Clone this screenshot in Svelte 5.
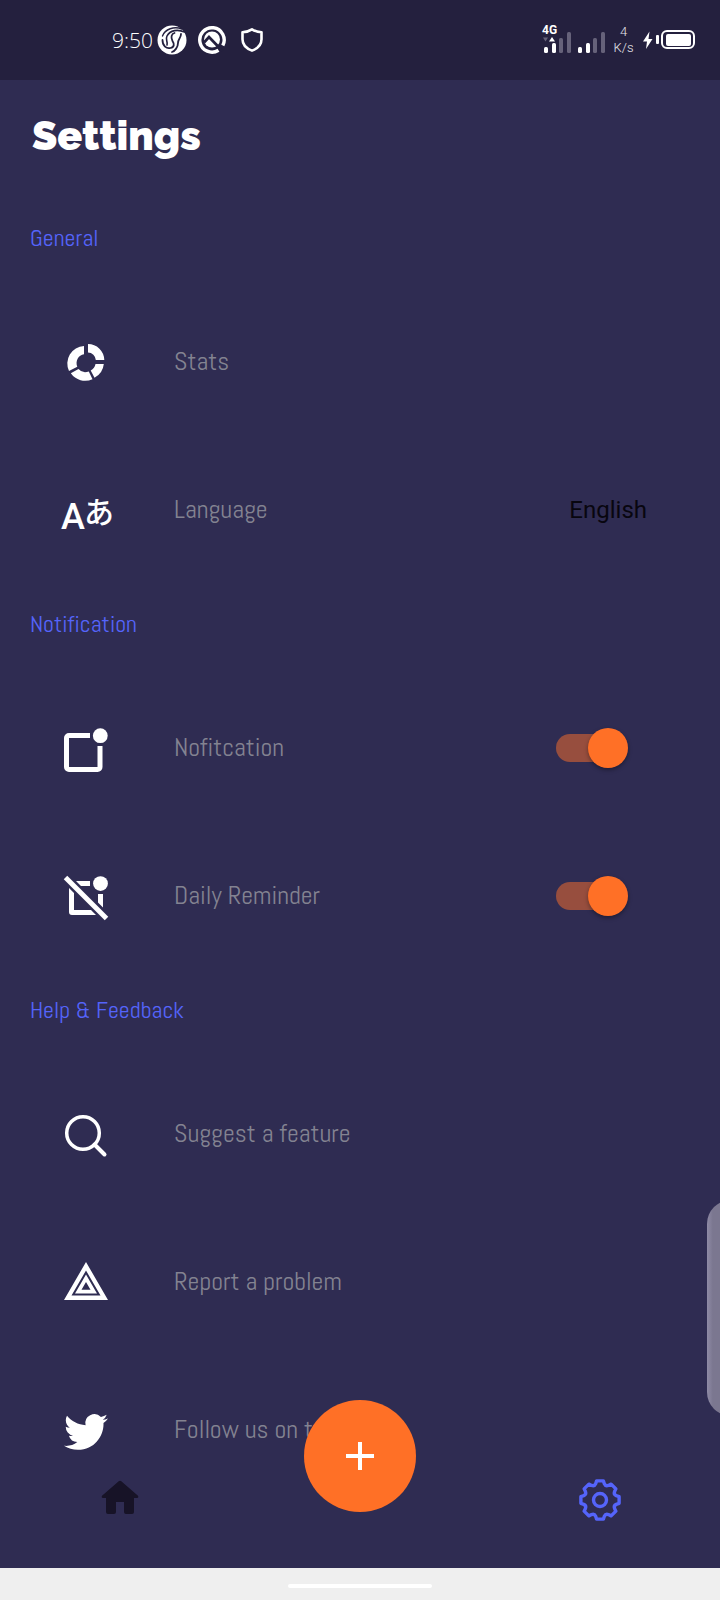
<script>
  let notification = $state(true);
  let reminder = $state(true);

  const point = (deg, r) => {
    const a = (deg * Math.PI) / 180;
    return `${(24 + r * Math.sin(a)).toFixed(2)} ${(24 - r * Math.cos(a)).toFixed(2)}`;
  };
  const gear =
    Array.from({ length: 8 }, (_, i) => {
      const a = i * 45;
      return `${i ? 'L' : 'M'}${point(a - 10, 19.4)}L${point(a + 10, 19.4)}L${point(a + 15, 16.8)}Q${point(a + 22.5, 14.6)} ${point(a + 30, 16.8)}`;
    }).join('') + 'Z';
</script>

<div class="screen">
  <header class="status">
    <div class="group">
      <time>9:50</time>
      <svg class="badge" width="30" height="30" viewBox="0 0 30 30" aria-hidden="true">
        <circle cx="15" cy="15" r="14.5" fill="#fff" />
        <g fill="none" stroke="#24203e" stroke-linecap="round">
          <path d="M25 4C17 1 8 4 5.500 11" stroke-width="1.400" />
          <path d="M27.500 7C21 4 13 5 10 11c-2 4 1 5 0 9" stroke-width="1.600" />
          <path d="M5.500 15c0 6 4 9 8 8 4-1 4-4 2-7-2-4-1-7 2-8" stroke-width="1.800" />
          <path d="M24 9c0 4-3 5-3 9s-3 8-6 9" stroke-width="1.800" />
        </g>
      </svg>
      <svg class="badge" width="30" height="30" viewBox="0 0 30 30" aria-hidden="true">
        <path d="M21.500 25.200A12.200 12.200 0 1 1 25.800 20.500" fill="none" stroke="#fff" stroke-width="3.400" />
        <circle cx="15" cy="14.500" r="8" fill="#fff" />
        <path d="M7 17.500L12 12L25.500 26" fill="none" stroke="#24203e" stroke-width="2.800" />
      </svg>
      <svg class="badge" width="30" height="30" viewBox="0 0 30 30" aria-hidden="true">
        <path d="M15 4.300c3 2 6 2.700 9.500 3v7c0 5.500-4 9.300-9.500 11.300-5.500-2-9.500-5.800-9.500-11.300v-7c3.500-.3 6.500-1 9.500-3z" fill="none" stroke="#fff" stroke-width="2.600" stroke-linejoin="round" />
      </svg>
    </div>
    <div class="group right">
      <div class="mobile">
        <span class="net">4G</span>
        <svg width="64" height="30" viewBox="0 0 64 30" aria-hidden="true">
          <g fill="#fff">
            <rect x="3" y="22" width="4" height="6" rx="1.500" />
            <rect x="11" y="18" width="4" height="10" rx="1.500" />
            <path d="M8 16.500l3-4.500 3 4.500z" />
            <rect x="37" y="22" width="4" height="6" rx="1.500" />
            <rect x="45" y="18" width="4" height="10" rx="1.500" />
          </g>
          <g fill="#66627a">
            <path d="M2 12.500h5l-2.500 4z" />
            <rect x="18" y="13" width="4" height="15" rx="1.500" />
            <rect x="26" y="7" width="4" height="21" rx="1.500" />
            <rect x="52" y="13" width="4" height="15" rx="1.500" />
            <rect x="60" y="7" width="4" height="21" rx="1.500" />
          </g>
        </svg>
      </div>
      <div class="rate"><span>4</span><span>K/s</span></div>
      <svg width="53" height="22" viewBox="0 0 53 22" aria-hidden="true">
        <path d="M7.500 2.500L1 12.500h4l-1 7.500 6.500-10H6.500z" fill="#fff" />
        <rect x="14" y="6" width="3" height="9" rx="1" fill="#fff" />
        <rect x="20" y="2" width="32" height="17" rx="5" fill="none" stroke="#fff" stroke-width="2" />
        <rect x="24" y="5" width="25" height="12" rx="2" fill="#fff" />
      </svg>
    </div>
  </header>

  <main>
    <h1>Settings</h1>

    <section>
      <h2>General</h2>
      <a class="row" href="#stats">
        <svg class="icon" viewBox="0 0 48 48" aria-hidden="true">
          <path d="M22 8A17.500 17.500 0 0 0 7 33L15.300 28.700A9 9 0 0 1 22 16.200ZM8.800 35.300A17.500 17.500 0 0 0 30.500 41.200L26.800 33.500A9 9 0 0 1 16.500 31ZM41.800 26H33.500A9 9 0 0 1 28.700 32.500L32.500 39.700A17.500 17.500 0 0 0 41.800 26ZM26 6A16.300 16.300 0 0 1 42.300 22H33.800A8 8 0 0 0 26 14.500Z" />
        </svg>
        <span>Stats</span>
      </a>
      <a class="row" href="#language">
        <svg class="icon" viewBox="0 0 48 48" aria-hidden="true">
          <text class="latin" x="-1" y="43">A</text>
          <text class="kana" x="22" y="37">あ</text>
        </svg>
        <span>Language</span>
        <span class="value">English</span>
      </a>
    </section>

    <section>
      <h2>Notification</h2>
      <label class="row">
        <svg class="icon" viewBox="0 0 48 48" aria-hidden="true">
          <path d="M28 11.500H7A2.500 2.500 0 0 0 4.500 14V43A2.500 2.500 0 0 0 7 45.500H35.500A2.500 2.500 0 0 0 38 43V22" fill="none" stroke="#fff" stroke-width="5" />
          <circle cx="38.300" cy="11.700" r="7.400" />
        </svg>
        <span>Nofitcation</span>
        <input type="checkbox" role="switch" bind:checked={notification} />
      </label>
      <label class="row">
        <svg class="icon" viewBox="0 0 48 48" aria-hidden="true">
          <path d="M14 9H28V14H19ZM7 16L12 21V38H29L34 43H10A3 3 0 0 1 7 40ZM36 22H41V35.500L36 30.500Z" />
          <path d="M3.500 5.500L44.500 46.500" stroke="#fff" stroke-width="5" />
          <circle cx="38.500" cy="11.600" r="7.400" />
        </svg>
        <span>Daily Reminder</span>
        <input type="checkbox" role="switch" bind:checked={reminder} />
      </label>
    </section>

    <section>
      <h2>Help &amp; Feedback</h2>
      <a class="row" href="#suggest">
        <svg class="icon" viewBox="0 0 48 48" aria-hidden="true">
          <circle cx="21" cy="23" r="16.300" fill="none" stroke="#fff" stroke-width="3.500" />
          <path d="M32.500 34.500L42.500 44.500" stroke="#fff" stroke-width="4" stroke-linecap="round" />
        </svg>
        <span>Suggest a feature</span>
      </a>
      <a class="row" href="#report">
        <svg class="icon" viewBox="0 0 48 48" aria-hidden="true">
          <path fill-rule="evenodd" d="M24 4L46 42H2ZM24 12.500L9.500 37.500H38.500ZM24 16.500L35 35.500H13ZM24 24L19.500 31.700H28.500Z" />
        </svg>
        <span>Report a problem</span>
      </a>
      <a class="row" href="#twitter">
        <svg class="icon" viewBox="0 0 48 48" aria-hidden="true">
          <path transform="translate(2 4) scale(1.833)" d="M23.953 4.570a10 10 0 0 1-2.825.775 4.958 4.958 0 0 0 2.163-2.723c-.951.555-2.005.959-3.127 1.184a4.920 4.920 0 0 0-8.384 4.482C7.690 8.095 4.067 6.130 1.640 3.162a4.822 4.822 0 0 0-.666 2.475c0 1.710.870 3.213 2.188 4.096a4.904 4.904 0 0 1-2.228-.616v.060a4.923 4.923 0 0 0 3.946 4.827 4.996 4.996 0 0 1-2.212.085 4.936 4.936 0 0 0 4.604 3.417 9.867 9.867 0 0 1-6.102 2.105c-.390 0-.779-.023-1.170-.067a13.995 13.995 0 0 0 7.557 2.209c9.053 0 13.998-7.496 13.998-13.985 0-.210 0-.420-.015-.630A9.935 9.935 0 0 0 24 4.590z" />
        </svg>
        <span>Follow us on twitter</span>
      </a>
    </section>
  </main>

  <nav>
    <a href="#home" aria-label="Home">
      <svg viewBox="0 0 48 48" aria-hidden="true">
        <path d="M22.700 5.200q1.300-1 2.600 0L42 19.700q1 2-1 2.300H38V36a2 2 0 0 1-2 2H30a2 2 0 0 1-2-2V26H20V36a2 2 0 0 1-2 2H12a2 2 0 0 1-2-2V22H7q-2-.3-1-2.300Z" fill="#171327" />
      </svg>
    </a>
    <button type="button" class="fab" aria-label="Add">
      <svg viewBox="0 0 28 28" aria-hidden="true"><path d="M14 0V28M0 14H28" stroke="#fff" stroke-width="4" /></svg>
    </button>
    <a href="#settings" aria-label="Settings">
      <svg viewBox="0 0 48 48" fill="none" stroke="#5564fb" stroke-width="3.400" stroke-linejoin="round" aria-hidden="true">
        <path d={gear} />
        <circle cx="24" cy="24" r="6.500" />
      </svg>
    </a>
  </nav>
  <div class="edge"></div>
  <footer><div class="pill"></div></footer>
</div>

<style>
  :global(body) { margin: 0; background: #2f2c52; }
  .screen {
    position: relative;
    display: flex;
    flex-direction: column;
    height: 100vh;
    overflow: hidden;
    background: #2f2c52;
    color: #fff;
    font-family: Abel, "Roboto Condensed", Roboto, sans-serif;
    font-weight: 400;
  }
  .status {
    flex: none;
    display: flex;
    justify-content: space-between;
    box-sizing: border-box;
    height: 80px;
    padding: 0 25px 0 112px;
    background: #24203e;
  }
  .group { display: flex; align-items: center; gap: 10px; }
  .group svg { display: block; }
  .right { gap: 8px; }
  time {
    width: 35px;
    white-space: nowrap;
    font: 300 21px/32px "Open Sans", sans-serif;
  }
  .mobile { position: relative; }
  .net {
    position: absolute;
    left: 1px;
    top: -2px;
    font: 700 12px/14px Roboto, sans-serif;
  }
  .rate {
    display: flex;
    flex-direction: column;
    align-items: center;
    width: 21px;
    font: 300 13px/16px Roboto, sans-serif;
    color: #e6e5ea;
  }
  main {
    flex: 1;
    min-height: 0;
    overflow-y: auto;
    scrollbar-width: none;
  }
  h1 {
    margin: 0;
    padding: 32px 32px 38px;
    font: 900 41px/48px Raleway, Inter, sans-serif;
  }
  h2 {
    margin: 0;
    padding: 24px 30px 34px;
    color: #5564fb;
    font-size: 24px;
    line-height: 32px;
    font-weight: 400;
  }
  .row {
    display: flex;
    align-items: center;
    gap: 64px;
    box-sizing: border-box;
    height: 148px;
    padding: 0 92px 0 62px;
    color: #838391;
    font-size: 26px;
    line-height: 32px;
    text-decoration: none;
  }
  .icon {
    flex: none;
    width: 48px;
    height: 48px;
    overflow: visible;
    fill: #fff;
  }
  .latin { font: 500 36px Roboto, sans-serif; }
  .kana { font: 500 30px "Noto Sans CJK JP", sans-serif; }
  .value {
    margin: 0 -19px 0 auto;
    color: #08060f;
    font: 400 24px/32px Roboto, sans-serif;
  }
  input {
    appearance: none;
    position: relative;
    width: 72px;
    height: 40px;
    margin: 0 0 0 auto;
  }
  input::before {
    content: "";
    position: absolute;
    inset: 6px 4px 6px 0;
    border-radius: 14px;
    background: #6c6985;
  }
  input::after {
    content: "";
    position: absolute;
    left: 0;
    top: 0;
    width: 40px;
    height: 40px;
    border-radius: 50%;
    background: #ddd;
    box-shadow: 0 2px 4px rgb(0 0 0 / 35%);
  }
  input:checked::before { background: #974e3e; }
  input:checked::after { left: 32px; background: #ff7026; }
  nav {
    position: absolute;
    left: 0;
    right: 0;
    bottom: 32px;
    display: grid;
    grid-template-columns: repeat(3, 1fr);
    justify-items: center;
    align-items: end;
    box-sizing: border-box;
    height: 168px;
    padding-bottom: 44px;
  }
  nav a, nav a svg { display: block; width: 48px; height: 48px; }
  .fab {
    display: grid;
    place-items: center;
    align-self: start;
    width: 112px;
    height: 112px;
    padding: 0;
    border: 0;
    border-radius: 50%;
    background: #ff7026;
  }
  .fab svg { width: 28px; height: 28px; }
  .edge {
    position: absolute;
    right: -35px;
    top: 75%;
    width: 48px;
    height: 216px;
    border-radius: 24px;
    background: linear-gradient(90deg, #8f8ba6, #7b7790 12%);
  }
  footer {
    flex: none;
    display: grid;
    place-items: center;
    height: 32px;
    padding-top: 4px;
    box-sizing: border-box;
    background: #efefef;
  }
  .pill {
    width: 20%;
    height: 4px;
    border-radius: 2px;
    background: #fff;
  }
</style>
